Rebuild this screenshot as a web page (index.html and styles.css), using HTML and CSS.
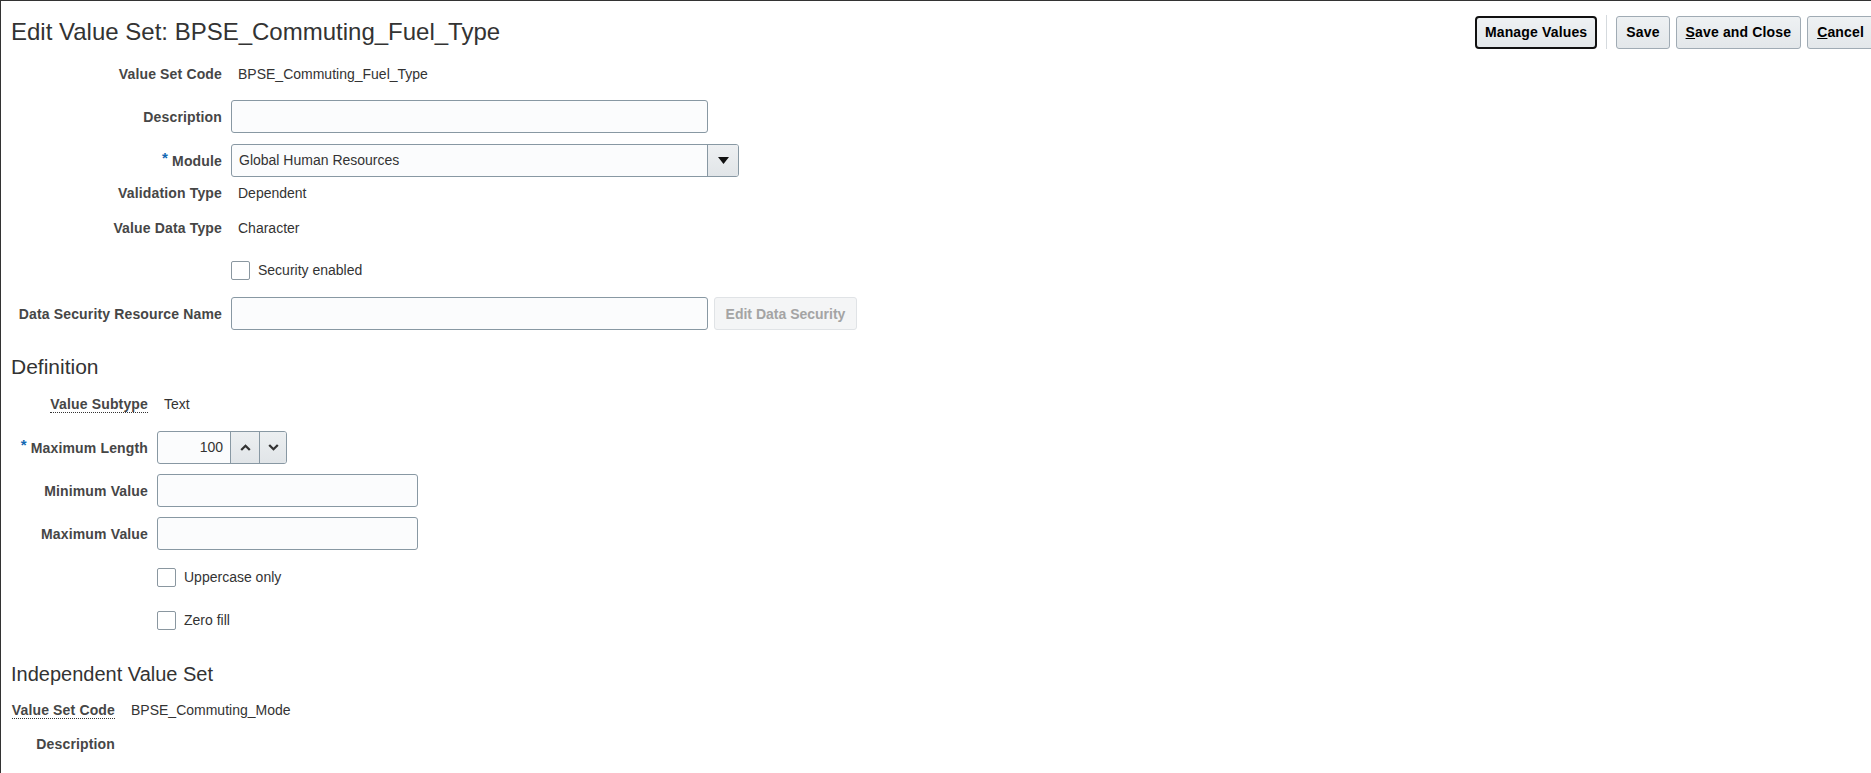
FILE: index.html
```html
<!DOCTYPE html>
<html lang="en">
<head>
<meta charset="utf-8">
<title>Edit Value Set</title>
<link rel="stylesheet" href="styles.css">
</head>
<body>
<div class="page">
  <header class="pagehead">
    <h1 class="title">Edit Value Set: BPSE_Commuting_Fuel_Type</h1>
    <div class="toolbar">
      <button class="btn btn-focus" type="button">Manage Values</button>
      <span class="tsep"></span>
      <button class="btn" type="button">Save</button>
      <button class="btn" type="button"><u>S</u>ave and Close</button>
      <button class="btn" type="button"><u>C</u>ancel</button>
    </div>
  </header>

  <section class="form form-main">
    <div class="row row-text first">
      <span class="lbl">Value Set Code</span>
      <span class="val">BPSE_Commuting_Fuel_Type</span>
    </div>
    <div class="row row-input m15">
      <span class="lbl">Description</span>
      <span class="field"><span class="input w-wide"></span></span>
    </div>
    <div class="row row-input m11">
      <span class="lbl"><span class="req">*</span> Module</span>
      <span class="field">
        <span class="select">
          <span class="select-text">Global Human Resources</span>
          <span class="select-btn"><svg width="11" height="7" viewBox="0 0 11 7"><path d="M0 0h11L5.5 7z" fill="#111"/></svg></span>
        </span>
      </span>
    </div>
    <div class="row row-text m5">
      <span class="lbl">Validation Type</span>
      <span class="val">Dependent</span>
    </div>
    <div class="row row-text m13">
      <span class="lbl">Value Data Type</span>
      <span class="val">Character</span>
    </div>
    <div class="row row-text m20">
      <span class="lbl"></span>
      <span class="field"><span class="check"></span><span class="check-label">Security enabled</span></span>
    </div>
    <div class="row row-input m16">
      <span class="lbl">Data Security Resource Name</span>
      <span class="field">
        <span class="input w-wide"></span>
        <button class="btn-disabled" type="button">Edit Data Security</button>
      </span>
    </div>
  </section>

  <h2 class="heading h-def">Definition</h2>

  <section class="form form-def">
    <div class="row row-text first">
      <span class="lbl"><span class="dotted">Value Subtype</span></span>
      <span class="val">Text</span>
    </div>
    <div class="row row-input m16">
      <span class="lbl"><span class="req">*</span> Maximum Length</span>
      <span class="field">
        <span class="spin">
          <span class="spin-text">100</span>
          <span class="spin-btn"><svg width="11" height="7" viewBox="0 0 11 7"><path d="M1.2 6L5.5 1.8 9.8 6" fill="none" stroke="#333" stroke-width="2.3"/></svg></span>
          <span class="spin-btn last"><svg width="11" height="7" viewBox="0 0 11 7"><path d="M1.2 1L5.5 5.2 9.8 1" fill="none" stroke="#333" stroke-width="2.3"/></svg></span>
        </span>
      </span>
    </div>
    <div class="row row-input m10">
      <span class="lbl">Minimum Value</span>
      <span class="field"><span class="input w-mid"></span></span>
    </div>
    <div class="row row-input m10">
      <span class="lbl">Maximum Value</span>
      <span class="field"><span class="input w-mid"></span></span>
    </div>
    <div class="row row-text m16">
      <span class="lbl"></span>
      <span class="field"><span class="check"></span><span class="check-label">Uppercase only</span></span>
    </div>
    <div class="row row-text m21">
      <span class="lbl"></span>
      <span class="field"><span class="check"></span><span class="check-label">Zero fill</span></span>
    </div>
  </section>

  <h3 class="heading h-ind">Independent Value Set</h3>

  <section class="form form-ind">
    <div class="row row-text first">
      <span class="lbl"><span class="dotted">Value Set Code</span></span>
      <span class="val">BPSE_Commuting_Mode</span>
    </div>
    <div class="row row-text m12">
      <span class="lbl">Description</span>
      <span class="val"></span>
    </div>
  </section>
</div>
</body>
</html>
```

FILE: styles.css
```css
* { box-sizing: border-box; }

html, body {
  margin: 0;
  padding: 0;
  background: #fff;
}

body {
  height: 773px;
  overflow: hidden;
  border-top: 1px solid #333;
  border-left: 1px solid #333;
  font-family: "Liberation Sans", Arial, sans-serif;
  font-size: 14px;
  color: #333;
}

.page {
  padding-left: 10px;
}

/* ---------- header ---------- */
.pagehead {
  display: flex;
  align-items: center;
  justify-content: space-between;
  padding-top: 14px;
  height: 48px;
}

.title {
  margin: 0;
  font-size: 24px;
  line-height: 28px;
  font-weight: normal;
  color: #333;
}

.toolbar {
  display: flex;
  align-items: center;
  gap: 6px;
  margin-right: -3px;
}

.btn {
  height: 33px;
  padding: 0 9px;
  border: 1px solid #a0abb4;
  border-radius: 3px;
  background: linear-gradient(#eef1f3, #e3e7ea);
  font-family: "Liberation Sans", Arial, sans-serif;
  font-size: 14px;
  font-weight: bold;
  letter-spacing: 0.15px;
  color: #000;
}

.btn u { text-decoration: underline; }

.btn-focus {
  border: 2px solid #111;
  border-radius: 4px;
  padding: 0 8px;
}

.tsep {
  width: 1px;
  height: 34px;
  background: #d5dade;
  margin: 0 3px;
}

/* ---------- forms ---------- */
.form { display: flex; flex-direction: column; }

.row {
  display: grid;
  grid-template-columns: var(--lw) auto;
  column-gap: 9px;
  align-items: center;
  justify-content: start;
}

.form-main { --lw: 204px; margin-left: 7px; margin-top: 14px; }
.form-def  { --lw: 137px; margin-top: 14px; }
.form-ind  { --lw: 104px; margin-top: 13px; }

.row-text  { height: 22px; line-height: 22px; }
.row-input { height: 33px; }

.m5  { margin-top: 5px; }
.m10 { margin-top: 10px; }
.m11 { margin-top: 11px; }
.m12 { margin-top: 12px; }
.m13 { margin-top: 13px; }
.m15 { margin-top: 15px; }
.m16 { margin-top: 16px; }
.m20 { margin-top: 20px; }
.m21 { margin-top: 21px; }

.lbl {
  text-align: right;
  font-weight: bold;
  letter-spacing: 0.15px;
  color: #464646;
  white-space: nowrap;
}

.val {
  padding-left: 7px;
  color: #333;
  white-space: nowrap;
}

.req {
  color: #1268b3;
  font-size: 15px;
  position: relative;
  top: -3px;
}

.dotted {
  border-bottom: 1px dotted #333;
}

.field {
  display: flex;
  align-items: center;
}

.input {
  display: block;
  height: 33px;
  border: 1px solid #8898a3;
  border-radius: 3px;
  background: #fbfcfd;
}
.w-wide { width: 477px; }
.w-mid  { width: 261px; }

.select {
  display: flex;
  width: 508px;
  height: 33px;
  border: 1px solid #8898a3;
  border-radius: 3px;
  background: #fbfcfd;
  overflow: hidden;
}
.select-text {
  flex: 1;
  padding-left: 7px;
  line-height: 31px;
  color: #333;
}
.select-btn {
  width: 31px;
  display: flex;
  align-items: center;
  justify-content: center;
  border-left: 1px solid #8898a3;
  background: linear-gradient(#eef0f2, #e1e5e8);
}

.btn-disabled {
  margin-left: 6px;
  width: 143px;
  height: 33px;
  border: 1px solid #e0e3e6;
  border-radius: 3px;
  background: #f4f5f6;
  font-family: "Liberation Sans", Arial, sans-serif;
  font-size: 14px;
  font-weight: bold;
  color: #a4a4a4;
}

.spin {
  display: flex;
  width: 130px;
  height: 33px;
  border: 1px solid #8898a3;
  border-radius: 3px;
  background: #fbfcfd;
  overflow: hidden;
}
.spin-text {
  width: 72px;
  text-align: right;
  padding-right: 7px;
  line-height: 31px;
  color: #333;
}
.spin-btn {
  width: 29px;
  display: flex;
  align-items: center;
  justify-content: center;
  border-left: 1px solid #8898a3;
  background: linear-gradient(#eceff1, #e1e5e8);
}
.spin-btn.last { width: 27px; }

.check {
  display: inline-block;
  width: 19px;
  height: 19px;
  border: 1px solid #8a97a0;
  border-radius: 2px;
  background: #fff;
}
.check-label {
  margin-left: 8px;
  color: #333;
}

/* ---------- headings ---------- */
.heading {
  margin: 0;
  font-weight: normal;
  color: #333;
}
.h-def {
  font-size: 21px;
  line-height: 24px;
  margin-top: 25px;
}
.h-ind {
  font-size: 20px;
  line-height: 24px;
  margin-top: 31px;
}
```
